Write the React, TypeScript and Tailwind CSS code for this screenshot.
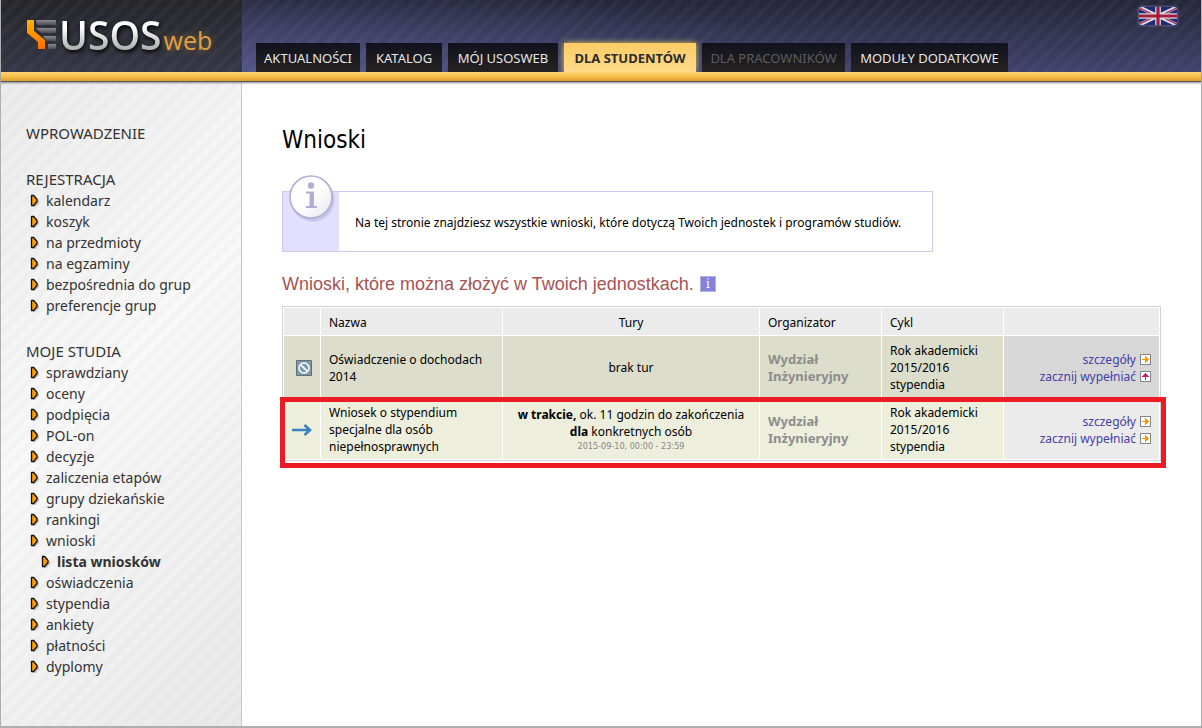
import { clsx } from 'clsx';

type Tab = {
  label: string;
  width: string;
  state?: 'active' | 'disabled';
};

type MenuItem = {
  label: string;
  nested?: boolean;
};

type Application = {
  id: number;
  open: boolean;
  name: string;
  organizer: string;
  cycle: string;
};

const tabs: Tab[] = [
  { label: 'AKTUALNOŚCI', width: 'min-w-[104px]' },
  { label: 'KATALOG', width: 'min-w-[76px]' },
  { label: 'MÓJ USOSWEB', width: 'min-w-[110px]' },
  { label: 'DLA STUDENTÓW', width: 'min-w-[132px]', state: 'active' },
  { label: 'DLA PRACOWNIKÓW', width: 'min-w-[143px]', state: 'disabled' },
  { label: 'MODUŁY DODATKOWE', width: 'min-w-[157px]' }
];

const menu: { title: string; items: MenuItem[] }[] = [
  { title: 'WPROWADZENIE', items: [] },
  {
    title: 'REJESTRACJA',
    items: [
      { label: 'kalendarz' },
      { label: 'koszyk' },
      { label: 'na przedmioty' },
      { label: 'na egzaminy' },
      { label: 'bezpośrednia do grup' },
      { label: 'preferencje grup' }
    ]
  },
  {
    title: 'MOJE STUDIA',
    items: [
      { label: 'sprawdziany' },
      { label: 'oceny' },
      { label: 'podpięcia' },
      { label: 'POL-on' },
      { label: 'decyzje' },
      { label: 'zaliczenia etapów' },
      { label: 'grupy dziekańskie' },
      { label: 'rankingi' },
      { label: 'wnioski' },
      { label: 'lista wniosków', nested: true },
      { label: 'oświadczenia' },
      { label: 'stypendia' },
      { label: 'ankiety' },
      { label: 'płatności' },
      { label: 'dyplomy' }
    ]
  }
];

const applications: Application[] = [
  {
    id: 1,
    open: false,
    name: 'Oświadczenie o dochodach 2014',
    organizer: 'Wydział Inżynieryjny',
    cycle: 'Rok akademicki 2015/2016 stypendia'
  },
  {
    id: 2,
    open: true,
    name: 'Wniosek o stypendium specjalne dla osób niepełnosprawnych',
    organizer: 'Wydział Inżynieryjny',
    cycle: 'Rok akademicki 2015/2016 stypendia'
  }
];

function Logo() {
  return (
    <a href="#" aria-label="USOSweb" className="flex pl-[25px] pt-[10px]">
      <svg width="30" height="30" viewBox="0 0 30 30" className="mt-[10px] shrink-0" aria-hidden="true">
        <defs>
          <linearGradient id="ribbon" x1="0" y1="0" x2="0" y2="1">
            <stop offset="0" stopColor="#ffb400" />
            <stop offset="1" stopColor="#ff6c00" />
          </linearGradient>
          <linearGradient id="bar" x1="0" y1="0" x2="0" y2="1">
            <stop offset="0" stopColor="#8b8b8f" />
            <stop offset="1" stopColor="#4b4b50" />
          </linearGradient>
        </defs>
        <path d="M1 0h7v11l11 9v9h-7v-7L1 13z" fill="url(#ribbon)" />
        <path d="M10 0h20v5H11z" fill="url(#bar)" />
        <path d="M10 8h20v5H15z" fill="url(#bar)" />
        <path d="M17 16h13v5H21z" fill="url(#bar)" />
        <path d="M22 24h8v5h-8z" fill="url(#bar)" />
      </svg>
      <span className="flex items-baseline font-['Open_Sans',sans-serif]">
        <span className="bg-linear-to-b from-white from-35% to-[#b4b4b4] to-75% bg-clip-text pl-[3px] text-[39px] font-semibold leading-[50px] text-transparent drop-shadow-[1px_2px_2px_#000]">
          USOS
        </span>
        <span className="pl-[2px] text-[25px] font-medium leading-[50px] text-[#e0a040] [text-shadow:0_0_8px_#c99a4080]">web</span>
      </span>
    </a>
  );
}

function UkFlag() {
  return (
    <svg width="40" height="20" viewBox="0 0 40 20" preserveAspectRatio="none" aria-hidden="true" className="block rounded-sm border border-[#4b4e6c] shadow-[0_0_2px_#6a6b8c]">
      <path fill="#1b2a78" d="M0 0h40v20H0z" />
      <path stroke="#d4d6e2" strokeWidth="4" d="M0 0l40 20M40 0L0 20" />
      <path stroke="#b32540" strokeWidth="1.4" d="M0 1l18 9M22 10l18 9M40 1l-18 9M18 10L0 19" />
      <path stroke="#d4d6e2" strokeWidth="6" d="M20 0v20M0 10h40" />
      <path stroke="#a81c38" strokeWidth="3.4" d="M20 0v20M0 10h40" />
    </svg>
  );
}

function Bullet() {
  return (
    <svg width="12" height="14" viewBox="0 0 12 14" className="shrink-0" aria-hidden="true">
      <path d="M3 3h3l3 4v2l-4 4H3z" fill="#444" opacity="0.3" />
      <path d="M1.500 1.500h2.200L7 5.500v2L3.700 11.500H1.500z" fill="#ff9c00" stroke="#111" strokeWidth="1.300" strokeLinejoin="round" />
    </svg>
  );
}

function InfoBadge() {
  return (
    <svg width="50" height="50" viewBox="0 0 50 50" className="absolute -top-[17px] left-[5px]" aria-hidden="true">
      <defs>
        <linearGradient id="disc" x1="0" y1="0" x2="1" y2="1">
          <stop offset="0.5" stopColor="#fff" />
          <stop offset="1" stopColor="#e6e6ea" />
        </linearGradient>
      </defs>
      <circle cx="25" cy="25" r="22" fill="#9c98c8" opacity="0.18" />
      <circle cx="24" cy="24" r="22" fill="#9c98c8" opacity="0.25" />
      <circle cx="23" cy="22" r="21" fill="url(#disc)" stroke="#b1aed6" strokeWidth="1.6" />
      <circle cx="23" cy="10.500" r="3.2" fill="#b1aed6" />
      <path d="M18 16.500h8V31h3v2H18v-2h3.500V18.500H18z" fill="#b1aed6" />
    </svg>
  );
}

function ClosedIcon() {
  return (
    <svg width="16" height="16" viewBox="0 0 16 16" className="ml-1" role="img" aria-label="zamknięty">
      <path d="M.5.5h15v15H.5z" fill="#7f9aaa" stroke="#5b6e79" />
      <circle cx="8" cy="8" r="5" fill="none" stroke="#fff" strokeWidth="1.5" />
      <path d="M4.600 4.600l6.800 6.800" stroke="#fff" strokeWidth="1.500" />
    </svg>
  );
}

function OpenIcon() {
  return (
    <svg width="20" height="12" viewBox="0 0 20 12" className="mx-auto" role="img" aria-label="otwarty">
      <path d="M0 6h18M12.500 1L18 6l-5.500 5" fill="none" stroke="#3584bf" strokeWidth="2.6" />
    </svg>
  );
}

function LinkIcon({ up }: { up?: boolean }) {
  return (
    <svg width="11" height="11" viewBox="0 0 11 11" className="shrink-0" aria-hidden="true" shapeRendering="crispEdges">
      <path d="M0 0h11v11H0z" fill="#858585" />
      <path d="M1 1h9v9H1z" fill="#fff" />
      {up ? (
        <path d="M5 9V6H2V5h1V4h1V3h1V2h1v1h1v1h1v1h1v1H6v3z" fill="#c4247e" />
      ) : (
        <path d="M2 5h3V2h1v1h1v1h1v1h1v1H8v1H7v1H6v1H5V6H2z" fill="#ff9600" />
      )}
    </svg>
  );
}

function ActionLink({ label, up }: { label: string; up?: boolean }) {
  return (
    <a href="#" className="flex items-center justify-end gap-1 whitespace-nowrap text-[#4440a8]">
      {label}
      <LinkIcon up={up} />
    </a>
  );
}

function Header() {
  return (
    <header>
      <div className="flex h-[72px] bg-[#3f4269]">
        <div className="w-[241px] shrink-0 bg-[repeating-linear-gradient(135deg,#ffffff08_0_5px,transparent_5px_11px),linear-gradient(#25252a,#353746)]">
          <Logo />
        </div>
        <div className="relative flex flex-1 items-end bg-[repeating-linear-gradient(135deg,#ffffff08_0_5px,transparent_5px_11px),radial-gradient(ellipse_600px_90px_at_0_100%,#6468a480,transparent),linear-gradient(#25263a,#40436b)] pl-[14px]">
          <nav className="flex gap-[6px] font-['Noto_Sans',sans-serif] text-[13px]">
            {tabs.map((tab) => (
              <a
                key={tab.label}
                href="#"
                className={clsx(
                  'flex h-[29px] items-center justify-center whitespace-nowrap pt-[2px]',
                  tab.width,
                  tab.state === 'active' && 'bg-linear-to-b from-[#ffcc66] to-[#ffd98a] font-bold text-[#2b2b2b] shadow-[0_0_6px_#e0cc50]',
                  tab.state === 'disabled' && 'bg-linear-to-b from-[#11121d] to-[#262222] text-[#5c5c5f]',
                  !tab.state && 'bg-linear-to-b from-[#11121d] to-[#262222] text-[#e6e6e6]'
                )}
              >
                {tab.label}
              </a>
            ))}
          </nav>
          <button type="button" aria-label="English" className="absolute right-[23px] top-[6px]">
            <UkFlag />
          </button>
        </div>
      </div>
      <div className="relative h-[9px] bg-linear-to-b from-[#ffd377] via-[#f9bf48] to-[#d99e2f] shadow-[0_1px_0_#5a5a5a,0_2px_2px_#888]" />
    </header>
  );
}

function Sidebar() {
  return (
    <aside className="w-[241px] shrink-0 border-r border-[#c8c8c8] bg-[repeating-linear-gradient(135deg,#00000004_0_5px,transparent_5px_11px),linear-gradient(135deg,#ebebeb,#f8f8f8_45%,#e9e9e9)] pl-[25px] pt-[42px] font-['Noto_Sans',sans-serif] text-[14px] leading-[21px] text-[#333]">
      <nav className="flex flex-col gap-[25px]">
        {menu.map((section) => (
          <section key={section.title}>
            <h2 className="text-[15px]">
              <a href="#">{section.title}</a>
            </h2>
            <ul>
              {section.items.map((item) => (
                <li key={item.label}>
                  <a href="#" className={clsx('flex items-center gap-1', item.nested ? 'pl-[15px] font-bold' : 'pl-1')}>
                    <Bullet />
                    {item.label}
                  </a>
                </li>
              ))}
            </ul>
          </section>
        ))}
      </nav>
    </aside>
  );
}

function ApplicationsTable() {
  return (
    <div className="relative mt-[10px]">
      <table className="w-full table-fixed border-separate border-spacing-px border border-[#d3d3d3] text-left">
        <colgroup>
          <col className="w-[36px]" />
          <col className="w-[181px]" />
          <col />
          <col className="w-[121px]" />
          <col className="w-[121px]" />
          <col className="w-[155px]" />
        </colgroup>
        <thead>
          <tr className="bg-[#ebebeb] *:px-2 *:pb-[4px] *:pt-[6px] *:font-normal">
            <th />
            <th>Nazwa</th>
            <th className="text-center">Tury</th>
            <th>Organizator</th>
            <th>Cykl</th>
            <th />
          </tr>
        </thead>
        <tbody>
          {applications.map((row) => (
            <tr key={row.id} className={clsx('*:px-2 *:pb-[4px] *:pt-[6px]', row.open ? 'bg-[#edeedc]' : 'bg-[#dcddcb]')}>
              <td>{row.open ? <OpenIcon /> : <ClosedIcon />}</td>
              <td>{row.name}</td>
              <td className="text-center">
                {row.open ? (
                  <>
                    <p className="whitespace-nowrap">
                      <b>w trakcie,</b> ok. 11 godzin do zakończenia
                    </p>
                    <p>
                      <b>dla</b> konkretnych osób
                    </p>
                    <p className="font-['DejaVu_Sans_Condensed','DejaVu_Sans',sans-serif] text-[9px] leading-[13px] text-[#888]">
                      2015-09-10, 00:00 - 23:59
                    </p>
                  </>
                ) : (
                  'brak tur'
                )}
              </td>
              <td className="text-[13px] font-bold leading-[17px] text-[#8c8c8c]">{row.organizer}</td>
              <td>{row.cycle}</td>
              <td className={row.open ? 'bg-[#ebebeb]' : 'bg-[#d7d7d7]'}>
                <div className="pt-px">
                  <ActionLink label="szczegóły" />
                  <ActionLink label="zacznij wypełniać" up={!row.open} />
                </div>
              </td>
            </tr>
          ))}
        </tbody>
      </table>
      <div className="pointer-events-none absolute -bottom-[7px] -left-[2px] -right-[5px] h-[71px] border-5 border-[#ed1c24]" />
    </div>
  );
}

export default function App() {
  return (
    <div className="flex min-h-screen flex-col border-x border-b-2 border-[#aeaeae] bg-white">
      <Header />
      <div className="flex flex-1">
        <Sidebar />
        <main className="min-w-0 flex-1 px-10 pt-[42px] font-['Noto_Sans',sans-serif] text-[12px] leading-[17px] text-black">
          <h1 className="font-['DejaVu_Sans_Condensed','DejaVu_Sans',sans-serif] text-[24px] leading-[34px]">Wnioski</h1>
          <div className="relative mt-[34px] flex h-[61px] w-[651px] max-w-full border border-[#cdcaf2]">
            <div className="w-[56px] shrink-0 bg-[#e3dfff]" />
            <InfoBadge />
            <p className="self-center whitespace-nowrap pl-4 pt-[2px]">
              Na tej stronie znajdziesz wszystkie wnioski, które dotyczą Twoich jednostek i programów studiów.
            </p>
          </div>
          <h2 className="mt-[20px] flex items-center gap-[6px] font-['Liberation_Sans',sans-serif] text-[18px] leading-6 text-[#a85252]">
            Wnioski, które można złożyć w Twoich jednostkach.
            <button type="button" className="size-4 border border-[#b5b2dc] bg-[#8480dc] text-center font-['DejaVu_Serif',serif] text-[12px] leading-[14px] text-white">
              i
            </button>
          </h2>
          <ApplicationsTable />
        </main>
      </div>
    </div>
  );
}
